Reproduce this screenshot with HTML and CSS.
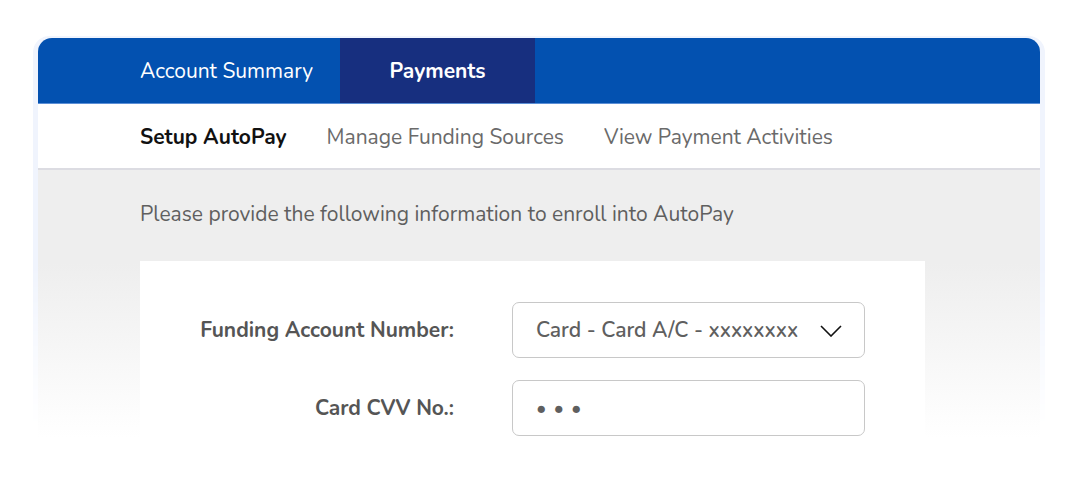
FILE: index.html
```html
<!DOCTYPE html>
<html lang="en">
<head>
  <meta charset="UTF-8" />
  <meta name="viewport" content="width=device-width, initial-scale=1.0" />
  <title>Setup AutoPay</title>
  <link rel="stylesheet" href="styles.css">
</head>
<body>
  <div class="card">
    <!-- Top tabs -->
    <nav class="top-tabs">
      <a class="tab">Account Summary</a>
      <a class="tab active">Payments</a>
    </nav>

    <!-- Sub navigation -->
    <nav class="sub-nav">
      <a class="sub-link active">Setup AutoPay</a>
      <a class="sub-link">Manage Funding Sources</a>
      <a class="sub-link">View Payment Activities</a>
    </nav>

    <!-- Form body -->
    <section class="content">
      <p class="intro">Please provide the following information to enroll into AutoPay</p>
      <div class="form-panel">
        <div class="form-row">
          <label class="form-label">Funding Account Number:</label>
          <div class="field select-field">
            <span>Card - Card A/C - xxxxxxxx</span>
            <svg class="chevron" width="22" height="12" viewBox="0 0 22 12" fill="none">
              <path d="M1 1l10 10L21 1" stroke="#111" stroke-width="1.6" />
            </svg>
          </div>
        </div>
        <div class="form-row">
          <label class="form-label">Card CVV No.:</label>
          <div class="field">
            <span class="dots">&bull;&bull;&bull;</span>
          </div>
        </div>
      </div>
    </section>
  </div>
</body>
</html>
```

FILE: styles.css
```css
* {
  margin: 0;
  padding: 0;
  box-sizing: border-box;
}
body {
  background: #fff;
  font-family: 'Nunito', 'Open Sans', sans-serif;
  padding: 38px 38px 0;
  height: 495px;
  overflow: hidden;
}
.card {
  position: relative;
  width: 1002px;
  height: 457px;
  border-radius: 14px 14px 0 0;
  background: linear-gradient(to bottom, #eeeeee 0, #eeeeee 225px, #ffffff 400px);
}
/* soft blue glow round the card, fading out towards the bottom */
.card::before {
  content: '';
  position: absolute;
  inset: -2px -5px 0 -5px;
  border-radius: 16px 16px 0 0;
  background: #f0f4fd;
  box-shadow: 0 -6px 24px rgba(140, 150, 180, 0.10);
  -webkit-mask-image: linear-gradient(to bottom, #000 50%, transparent 85%);
  mask-image: linear-gradient(to bottom, #000 50%, transparent 85%);
  z-index: -1;
}
/* Top tabs */
.top-tabs {
  display: flex;
  height: 66px;
  background: #0351b0;
  padding-left: 102px;
  border-bottom: 1px solid #5b8fd6;
  border-radius: 14px 14px 0 0;
}
.tab {
  display: flex;
  align-items: center;
  font-size: 21px;
  color: #fff;
  padding-right: 27px;
}
.tab.active {
  background: #172f7f;
  font-weight: 700;
  width: 195px;
  justify-content: center;
  padding: 0;
}
/* Sub navigation */
.sub-nav {
  display: flex;
  gap: 40px;
  align-items: center;
  height: 66px;
  background: #fff;
  padding: 2px 0 0 102px;
  border-bottom: 2px solid #dcdce2;
}
.sub-link {
  font-size: 21px;
  color: #6a6a6a;
}
.sub-link.active {
  color: #111;
  font-weight: 700;
}
/* Content */
.content {
  padding: 30px 0 0 102px;
}
.intro {
  font-size: 21px;
  line-height: 29px;
  color: #5f5f5f;
  margin-bottom: 32px;
}
.form-panel {
  width: 785px;
  background: #fff;
  padding: 41px 0 60px;
  display: flex;
  flex-direction: column;
  gap: 22px;
}
.form-row {
  display: flex;
  align-items: center;
}
.form-label {
  width: 314px;
  text-align: right;
  font-size: 21px;
  font-weight: 700;
  color: #555;
  margin-right: 58px;
}
.field {
  width: 353px;
  height: 56px;
  border: 1px solid #c8c8c8;
  border-radius: 7px;
  display: flex;
  align-items: center;
  justify-content: space-between;
  padding: 0 22px 0 23px;
  font-size: 21px;
  font-weight: 600;
  color: #5f5f5f;
  background: #fff;
}
.chevron {
  margin-top: 1px;
}
.dots {
  font-size: 20px;
  letter-spacing: 7px;
  color: #5f5f5f;
}
```
